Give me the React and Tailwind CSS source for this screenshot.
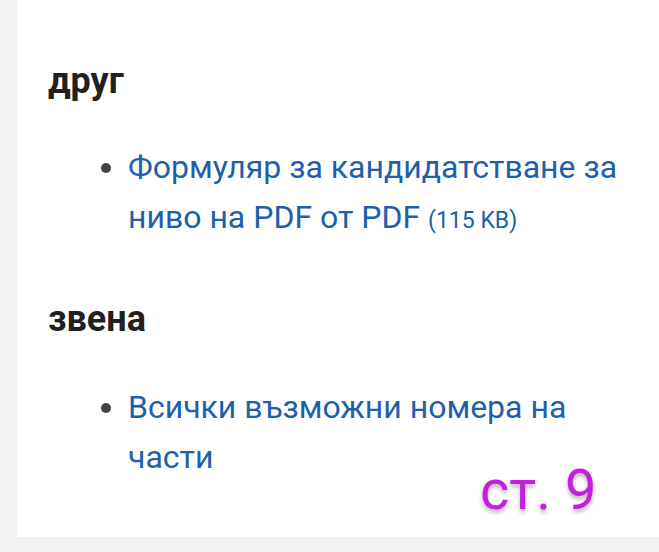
export default function App() {
  const font = { fontFamily: "Roboto, 'Noto Sans', sans-serif" };
  return (
    <div className="min-h-screen bg-[#f1f1f1] pl-[17px]" style={font}>
      <div className="relative h-[537px] bg-white pl-[31px] pt-[59px]">
        <h2 className="text-[36px] leading-[44px] font-bold text-[#212121]">друг</h2>
        <ul className="mt-[39px] pl-[80px] pr-[30px] list-disc marker:text-[#444] text-[32px] leading-[50px] text-[#1d60ad]">
          <li>
            <a>Формуляр за кандидатстване за ниво на PDF от PDF</a>{" "}
            <span className="text-[23px]">(115 KB)</span>
          </li>
        </ul>
        <h2 className="mt-[51px] text-[36px] leading-[44px] font-bold text-[#212121]">звена</h2>
        <ul className="mt-[41px] pl-[80px] pr-[30px] list-disc marker:text-[#444] text-[32px] leading-[50px] text-[#1d60ad]">
          <li>
            <a>Всички възможни номера на части</a>
          </li>
        </ul>
        <div className="absolute left-[463px] top-[462px] text-[56px] leading-none text-[#c41fe0] [text-shadow:0_3px_4px_rgba(0,0,0,0.3)]">
          ст. 9
        </div>
      </div>
    </div>
  );
}
